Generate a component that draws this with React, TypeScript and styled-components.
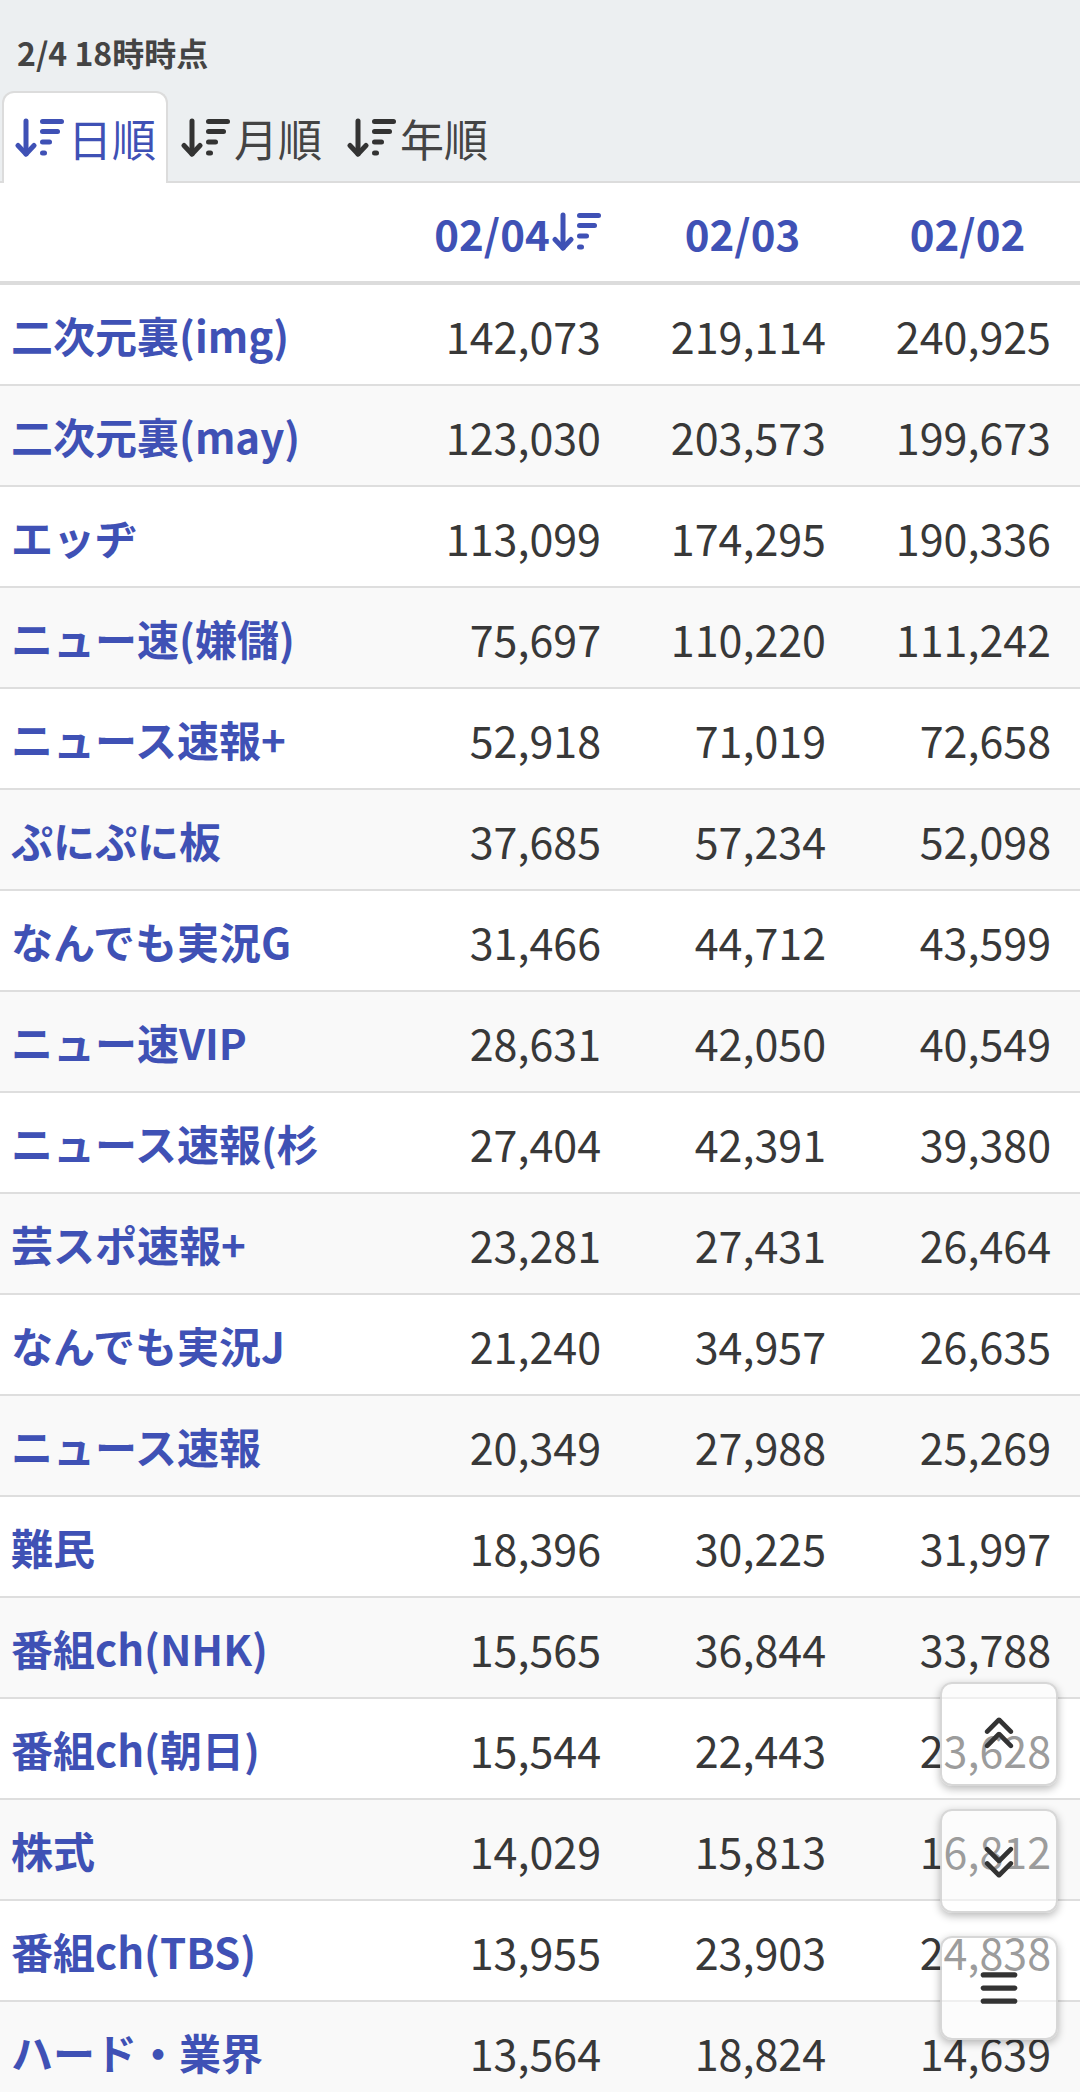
import React from "react";
import styled, { createGlobalStyle } from "styled-components";
import { FaAnglesUp, FaAnglesDown, FaBars } from "react-icons/fa6";

const GlobalStyle = createGlobalStyle`
  html, body { margin: 0; padding: 0; background: #fff; }
  body { font-family: "Noto Sans CJK JP", "Noto Sans", sans-serif; }
  * { box-sizing: border-box; }
`;

const BLUE = "#3f51b5";

const Top = styled.div`
  background: #eceff1;
`;

const Stamp = styled.div`
  height: 91px;
  padding: 12px 0 0 17px;
  display: flex;
  align-items: center;
  font-size: 32px;
  font-weight: 700;
  color: #444;
`;

const TabBar = styled.div`
  display: flex;
  height: 92px;
  padding-left: 2px;
  border-bottom: 2px solid #dcdcdc;
`;

const Tab = styled.div<{ $active?: boolean }>`
  display: flex;
  align-items: center;
  gap: 4px;
  padding: 0 10px 0 11px;
  margin-bottom: -2px;
  font-size: 44px;
  color: ${(p) => (p.$active ? BLUE : "#444")};
  background: ${(p) => (p.$active ? "#fff" : "transparent")};
  border: 2px solid ${(p) => (p.$active ? "#dcdcdc" : "transparent")};
  border-bottom: none;
  border-radius: 12px 12px 0 0;
  line-height: 1;
`;

const SortSvg = styled.svg`
  flex: none;
  display: block;
`;

const SortIcon = ({ color = "currentColor" }: { color?: string }) => (
  <SortSvg width="49" height="40" viewBox="0 0 49 40" fill="none" stroke={color} strokeWidth="5" strokeLinecap="round" strokeLinejoin="round">
    <line x1="11" y1="3" x2="11" y2="36" />
    <polyline points="3,27.5 11,36 19,27.5" />
    <line x1="27.5" y1="3.5" x2="46.5" y2="3.5" />
    <line x1="27.5" y1="13.5" x2="42.5" y2="13.5" />
    <line x1="27.5" y1="24" x2="34.5" y2="24" />
    <line x1="27.5" y1="35" x2="29.5" y2="35" />
  </SortSvg>
);

const Table = styled.div`
  display: grid;
  grid-template-columns: 405px 225px 225px 225px;
`;

const HeadRow = styled.div`
  display: contents;
`;

const HeadCell = styled.div`
  height: 102px;
  border-bottom: 4px solid #dcdcdc;
  display: flex;
  align-items: center;
  justify-content: center;
  gap: 2px;
  font-size: 42px;
  font-weight: 700;
  color: ${BLUE};
  background: #fff;
`;

const Row = styled.div<{ $even: boolean }>`
  display: contents;
  & > div {
    background: ${(p) => (p.$even ? "#f9f9f9" : "#fff")};
  }
`;

const NameCell = styled.div`
  height: 101px;
  border-bottom: 2px solid #dedede;
  display: flex;
  align-items: center;
  padding-left: 11px;
  font-size: 42px;
  font-weight: 700;
  color: ${BLUE};
  white-space: nowrap;
  overflow: hidden;
`;

const NumCell = styled.div`
  height: 101px;
  border-bottom: 2px solid #dedede;
  display: flex;
  align-items: center;
  justify-content: flex-end;
  padding-right: 29px;
  font-size: 43px;
  font-weight: 400;
  color: #383838;
`;

const FloatStack = styled.div`
  position: fixed;
  right: 22px;
  bottom: 52px;
  display: flex;
  flex-direction: column;
  gap: 23px;
`;

const FloatBtn = styled.div`
  width: 118px;
  height: 104px;
  border-radius: 12px;
  background: rgba(255, 255, 255, 0.5);
  border: 2px solid rgba(205, 205, 205, 0.8);
  box-shadow: 0 3px 8px rgba(0, 0, 0, 0.28);
  display: flex;
  align-items: center;
  justify-content: center;
  color: #333;
`;

const rows: [string, string, string, string][] = [
  ["二次元裏(img)", "142,073", "219,114", "240,925"],
  ["二次元裏(may)", "123,030", "203,573", "199,673"],
  ["エッヂ", "113,099", "174,295", "190,336"],
  ["ニュー速(嫌儲)", "75,697", "110,220", "111,242"],
  ["ニュース速報+", "52,918", "71,019", "72,658"],
  ["ぷにぷに板", "37,685", "57,234", "52,098"],
  ["なんでも実況G", "31,466", "44,712", "43,599"],
  ["ニュー速VIP", "28,631", "42,050", "40,549"],
  ["ニュース速報(杉", "27,404", "42,391", "39,380"],
  ["芸スポ速報+", "23,281", "27,431", "26,464"],
  ["なんでも実況J", "21,240", "34,957", "26,635"],
  ["ニュース速報", "20,349", "27,988", "25,269"],
  ["難民", "18,396", "30,225", "31,997"],
  ["番組ch(NHK)", "15,565", "36,844", "33,788"],
  ["番組ch(朝日)", "15,544", "22,443", "23,628"],
  ["株式", "14,029", "15,813", "16,812"],
  ["番組ch(TBS)", "13,955", "23,903", "24,838"],
  ["ハード・業界", "13,564", "18,824", "14,639"],
];

export default function App() {
  return (
    <>
      <GlobalStyle />
      <Top>
        <Stamp>2/4 18時時点</Stamp>
        <TabBar>
          <Tab $active>
            <SortIcon />
            <span>日順</span>
          </Tab>
          <Tab>
            <SortIcon color="#333" />
            <span>月順</span>
          </Tab>
          <Tab>
            <SortIcon color="#333" />
            <span>年順</span>
          </Tab>
        </TabBar>
      </Top>
      <Table>
        <HeadRow>
          <HeadCell />
          <HeadCell>
            <span>02/04</span>
            <SortIcon />
          </HeadCell>
          <HeadCell>02/03</HeadCell>
          <HeadCell>02/02</HeadCell>
        </HeadRow>
        {rows.map((r, i) => (
          <Row key={r[0]} $even={i % 2 === 1}>
            <NameCell>{r[0]}</NameCell>
            <NumCell>{r[1]}</NumCell>
            <NumCell>{r[2]}</NumCell>
            <NumCell>{r[3]}</NumCell>
          </Row>
        ))}
      </Table>
      <FloatStack>
        <FloatBtn>
          <FaAnglesUp size={38} />
        </FloatBtn>
        <FloatBtn>
          <FaAnglesDown size={38} />
        </FloatBtn>
        <FloatBtn>
          <FaBars size={42} />
        </FloatBtn>
      </FloatStack>
    </>
  );
}
